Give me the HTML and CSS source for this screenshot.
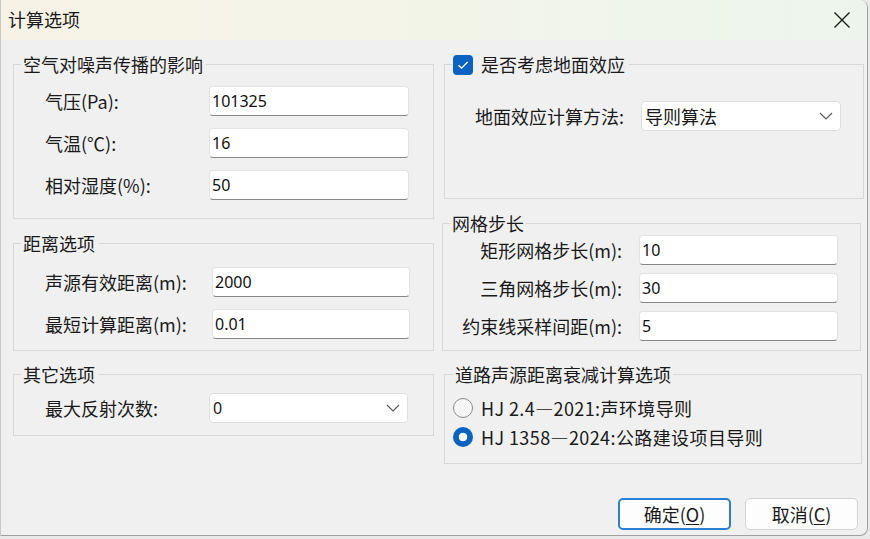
FILE: index.html
```html
<!DOCTYPE html>
<html lang="zh-CN">
<head>
<meta charset="utf-8">
<title>计算选项</title>
<link rel="stylesheet" href="styles.css">
</head>
<body>
<div class="window">
  <div class="titlebar">
    <span class="title">计算选项</span>
    <span class="close">
      <svg width="18" height="18" viewBox="0 0 18 18"><path d="M1.5 1.5 L16.5 16.5 M16.5 1.5 L1.5 16.5" stroke="#1b1b1b" stroke-width="1.4" fill="none"/></svg>
    </span>
  </div>
  <div class="content">
    <div class="columns">
      <div class="col col-left">
        <fieldset class="group g-air">
          <legend>空气对噪声传播的影响</legend>
          <div class="row"><span class="lbl">气压(Pa):</span><input class="field" type="text" value="101325"></div>
          <div class="row"><span class="lbl">气温(℃):</span><input class="field" type="text" value="16"></div>
          <div class="row"><span class="lbl">相对湿度(%):</span><input class="field" type="text" value="50"></div>
        </fieldset>
        <fieldset class="group g-dist">
          <legend>距离选项</legend>
          <div class="row"><span class="lbl">声源有效距离(m):</span><input class="field" type="text" value="2000"></div>
          <div class="row"><span class="lbl">最短计算距离(m):</span><input class="field" type="text" value="0.01"></div>
        </fieldset>
        <fieldset class="group g-other">
          <legend>其它选项</legend>
          <div class="row"><span class="lbl">最大反射次数:</span>
            <div class="combo"><span class="combo-text num">0</span>
              <svg class="chev" width="14" height="8" viewBox="0 0 14 8"><path d="M1 1 L7 7 L13 1" stroke="#5a5a5a" stroke-width="1.2" fill="none"/></svg>
            </div>
          </div>
        </fieldset>
      </div>
      <div class="col col-right">
        <fieldset class="group g-ground">
          <legend><span class="check"><svg width="20" height="20" viewBox="0 0 20 20"><path d="M5.5 10.2 L8.6 13.2 L14.6 7" stroke="#fff" stroke-width="1.3" fill="none"/></svg></span><span>是否考虑地面效应</span></legend>
          <div class="row"><span class="lbl">地面效应计算方法:</span>
            <div class="combo"><span class="combo-text">导则算法</span>
              <svg class="chev" width="14" height="8" viewBox="0 0 14 8"><path d="M1 1 L7 7 L13 1" stroke="#5a5a5a" stroke-width="1.2" fill="none"/></svg>
            </div>
          </div>
        </fieldset>
        <fieldset class="group g-grid">
          <legend>网格步长</legend>
          <div class="row"><span class="lbl">矩形网格步长(m):</span><input class="field" type="text" value="10"></div>
          <div class="row"><span class="lbl">三角网格步长(m):</span><input class="field" type="text" value="30"></div>
          <div class="row"><span class="lbl">约束线采样间距(m):</span><input class="field" type="text" value="5"></div>
        </fieldset>
        <fieldset class="group g-road">
          <legend>道路声源距离衰减计算选项</legend>
          <div class="radio-row"><span class="radio"></span><span class="radio-text">HJ 2.4—2021:声环境导则</span></div>
          <div class="radio-row"><span class="radio on"></span><span class="radio-text">HJ 1358—2024:公路建设项目导则</span></div>
        </fieldset>
      </div>
    </div>
    <div class="footer">
      <button class="btn btn-primary">确定(<u>O</u>)</button>
      <button class="btn">取消(<u>C</u>)</button>
    </div>
  </div>
</div>
</body>
</html>
```

FILE: styles.css
```css
* { box-sizing: border-box; }
html, body { margin: 0; padding: 0; }
body {
  width: 870px;
  height: 539px;
  background: #e9e9e9;
  font-family: "Noto Sans CJK SC", "Noto Sans", sans-serif;
  color: #1a1a1a;
  overflow: hidden;
}
.window {
  width: 868px;
  height: 536px;
  background: #f0f0f0;
  border-right: 1px solid #a0a0a0;
  border-bottom: 1px solid #a0a0a0;
  border-left: 1px solid #c8c8c8;
  border-radius: 0 8px 8px 0;
  overflow: hidden;
}
.titlebar {
  height: 40px;
  background: linear-gradient(to right, #f6f3e6 0%, #f3f4e8 50%, #ecf5ec 100%);
  display: flex;
  align-items: center;
  justify-content: space-between;
  padding-left: 7px;
  padding-right: 16px;
}
.title {
  font-size: 18px;
  line-height: 22px;
  margin-top: -2px;
}
.close {
  display: flex;
  width: 18px;
  height: 18px;
}
.content {
  display: flex;
  flex-direction: column;
}
.columns {
  display: flex;
  padding-top: 13px;
  padding-left: 12px;
}
.col { display: flex; flex-direction: column; }
.col-left { width: 421px; }
.col-right { width: 420px; margin-left: 10px; }

.group {
  margin: 0;
  padding: 0;
  border: 1px solid #d8d8d8;
  min-inline-size: 0;
}
.group legend {
  font-size: 18px;
  line-height: 22px;
  padding: 0 3px 0 2px;
  margin-left: 7px;
  height: 22px;
}
.row {
  display: flex;
  align-items: center;
  height: 30px;
}
.lbl {
  font-size: 18px;
  line-height: 22px;
  white-space: nowrap;
  flex: none;
}
.field {
  height: 30px;
  width: 200px;
  background: #fff;
  border: 1px solid #e3e3e3;
  border-bottom: 1px solid #878787;
  border-radius: 4px;
  padding: 0 0 0 2px;
  font-family: "Noto Sans", "Liberation Sans", sans-serif;
  font-size: 16px;
  color: #111;
  outline: none;
  margin: 0;
}
.combo {
  height: 30px;
  width: 200px;
  background: #fff;
  border: 1px solid #dedede;
  border-radius: 4px;
  display: flex;
  align-items: center;
  justify-content: space-between;
  padding: 0 7px 0 3px;
}
.combo-text { font-size: 18px; line-height: 22px; }
.combo-text.num { font-family: "Noto Sans", "Liberation Sans", sans-serif; font-size: 16px; }
.chev { display: block; }

/* left groups: rows indented */
.g-air .row, .g-dist .row, .g-other .row { padding-left: 31px; }

/* group 1 */
.g-air { padding: 11px 0 18px 0; }
.g-air .lbl { width: 164px; }
.g-air .row + .row { margin-top: 12px; }

/* group 2 */
.g-dist { margin-top: 13px; padding: 13px 0 11px 0; }
.g-dist .lbl { width: 167px; }
.g-dist .field { width: 198px; }
.g-dist .row + .row { margin-top: 12px; }

/* group 3 */
.g-other { margin-top: 12px; padding: 8px 0 12px 0; }
.g-other .lbl { width: 164px; }
.g-other .combo { width: 199px; height: 30px; }

/* group 4 */
.g-ground { padding: 26px 0 67px 0; }
.g-ground .row { padding-left: 30px; }
.g-ground legend {
  display: flex;
  align-items: center;
  gap: 8px;
  margin-left: 7px;
  padding: 0 4px 0 1px;
}
.check {
  width: 20px;
  height: 20px;
  border-radius: 4px;
  background: #0a63c2;
  display: flex;
  margin-top: 2px;
}
.g-ground .lbl { width: 166px; }

/* group 5 */
.g-grid { margin: 13px 3px 0 -2px; padding: 1px 0 9px 0; }
.g-grid legend { margin-left: 8px; padding: 0 2px 0 1px; }
.g-grid .lbl { width: 179px; text-align: right; }
.g-grid .field { margin-left: 17px; width: 199px; }
.g-grid .row + .row { margin-top: 8px; }

/* group 6 */
.g-road { margin: 12px 2px 0 0; padding: 12px 0 15px 0; }
.g-road legend { margin-left: 9px; padding: 0 2px 0 1px; }
.radio-row {
  display: flex;
  align-items: center;
  height: 22px;
  gap: 8px;
  padding-left: 8px;
}
.radio-row + .radio-row { margin-top: 7px; }
.radio {
  width: 20px;
  height: 20px;
  border-radius: 50%;
  border: 1px solid #8a8a8a;
  background: #f6f6f6;
  flex: none;
}
.radio.on {
  border: none;
  background: radial-gradient(circle, #ffffff 0 4px, #0a63c2 4.6px);
}
.radio-text {
  font-size: 18px;
  line-height: 22px;
  white-space: nowrap;
  letter-spacing: 0.4px;
}

.footer {
  display: flex;
  justify-content: flex-end;
  gap: 14px;
  padding-right: 9px;
  margin-top: 34px;
}
.btn {
  width: 113px;
  height: 32px;
  border: 1px solid #d3d3d3;
  background: #fdfdfd;
  border-radius: 5px;
  font-family: "Noto Sans CJK SC", "Noto Sans", sans-serif;
  font-size: 18px;
  line-height: 22px;
  color: #1a1a1a;
  padding: 0;
  margin: 0;
}
.btn u { text-underline-offset: 2px; }
.btn-primary {
  border: 2px solid #2a7ed3;
}
```
